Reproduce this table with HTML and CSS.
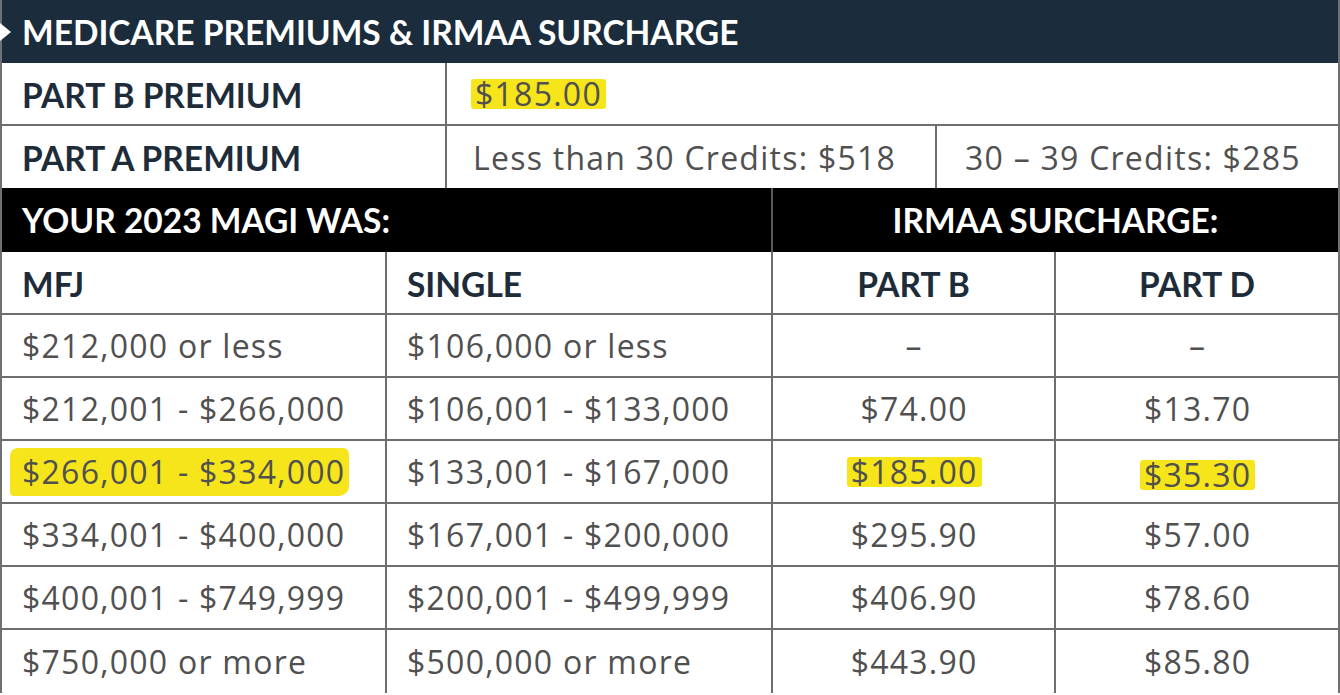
FILE: index.html
```html
<!DOCTYPE html>
<html lang="en">
<head>
<meta charset="utf-8">
<title>Medicare Premiums &amp; IRMAA Surcharge</title>
<link rel="stylesheet" href="styles.css">
</head>
<body>
<div class="sheet">
  <div class="title">
    <svg class="chev" width="12" height="20" viewBox="0 0 12 20"><path d="M0 1 L11 10 L0 19 Z" fill="#ffffff"/></svg>
    <span>MEDICARE PREMIUMS &amp; IRMAA SURCHARGE</span>
  </div>
  <div class="premiums">
    <div class="cell label">PART B PREMIUM</div>
    <div class="cell value span2 no-right"><span class="hl">$185.00</span></div>
    <div class="cell label last-row">PART A PREMIUM</div>
    <div class="cell value last-row">Less than 30 Credits: $518</div>
    <div class="cell value last-row no-right">30 – 39 Credits: $285</div>
  </div>
  <div class="dark">
    <div class="dark-cell">YOUR 2023 MAGI WAS:</div>
    <div class="dark-cell center">IRMAA SURCHARGE:</div>
  </div>
  <div class="bands">
    <div class="cell label">MFJ</div>
    <div class="cell label">SINGLE</div>
    <div class="cell label center">PART B</div>
    <div class="cell label center">PART D</div>

    <div class="cell value">$212,000 or less</div>
    <div class="cell value">$106,000 or less</div>
    <div class="cell value center">–</div>
    <div class="cell value center">–</div>

    <div class="cell value">$212,001 - $266,000</div>
    <div class="cell value">$106,001 - $133,000</div>
    <div class="cell value center">$74.00</div>
    <div class="cell value center">$13.70</div>

    <div class="cell value"><span class="hl hl-wide">$266,001 - $334,000</span></div>
    <div class="cell value">$133,001 - $167,000</div>
    <div class="cell value center"><span class="hl">$185.00</span></div>
    <div class="cell value center"><span class="hl hl-low">$35.30</span></div>

    <div class="cell value">$334,001 - $400,000</div>
    <div class="cell value">$167,001 - $200,000</div>
    <div class="cell value center">$295.90</div>
    <div class="cell value center">$57.00</div>

    <div class="cell value">$400,001 - $749,999</div>
    <div class="cell value">$200,001 - $499,999</div>
    <div class="cell value center">$406.90</div>
    <div class="cell value center">$78.60</div>

    <div class="cell value">$750,000 or more</div>
    <div class="cell value">$500,000 or more</div>
    <div class="cell value center">$443.90</div>
    <div class="cell value center">$85.80</div>
  </div>
</div>
</body>
</html>
```

FILE: styles.css
```css
* { box-sizing: border-box; }
html, body { margin: 0; padding: 0; background: #ffffff; }
body { width: 1340px; height: 695px; overflow: hidden; }

.sheet {
  width: 1340px;
  border-left: 2px solid #707070;
  border-right: 2px solid #707070;
}

.title {
  height: 63px;
  background: #1b2d3d;
  color: #ffffff;
  font-family: Lato, "Noto Sans", sans-serif;
  font-weight: 700;
  font-size: 33.5px;
  display: flex;
  align-items: center;
  padding-left: 20px;
  position: relative;
}
.title .chev {
  position: absolute;
  left: -2px;
  top: 22px;
}

.cell {
  display: flex;
  align-items: center;
  padding-left: 20px;
  border-bottom: 2px solid #6e6e6e;
  border-right: 2px solid #6e6e6e;
  height: 63px;
}
.no-right { border-right: none; }

.label {
  font-family: Lato, "Noto Sans", sans-serif;
  font-weight: 700;
  font-size: 33.5px;
  color: #1e2c3a;
  padding-top: 3px;
}
.value {
  font-family: "Open Sans", "Noto Sans", sans-serif;
  font-size: 32px;
  letter-spacing: 1.25px;
  color: #505050;
}
.center { justify-content: center; padding-left: 0; }
.value.center { padding-left: 1.25px; }

.premiums {
  display: grid;
  grid-template-columns: 445px 490px 1fr;
}
.premiums .span2 { grid-column: span 2; }
.premiums .last-row { height: 62px; border-bottom: none; }
.premiums .cell.value { padding-left: 26px; }
.premiums .cell.value.no-right { padding-left: 28px; }
.premiums .cell.label { padding-top: 2px; }

.dark {
  display: grid;
  grid-template-columns: 771px 1fr;
  height: 64px;
  background: #000000;
  color: #ffffff;
  font-family: Lato, "Noto Sans", sans-serif;
  font-weight: 700;
  font-size: 33.5px;
}
.dark-cell {
  display: flex;
  align-items: center;
  padding-left: 20px;
}
.dark-cell:first-child { border-right: 2px solid #5a5a5a; }
.dark-cell.center { justify-content: center; padding-left: 0; }

.bands {
  display: grid;
  grid-template-columns: 385px 386px 283px 1fr;
}
.bands .cell:nth-child(4n) { border-right: none; }
.bands .cell:nth-last-child(-n+4) { border-bottom: none; }

.hl {
  display: inline-block;
  background: #f6e51a;
  border-radius: 3px;
  line-height: 30px;
  padding: 0 4px;
  margin: 0 -4px;
}
.hl-wide {
  line-height: 36px;
  padding: 6px 4px 6px 12px;
  margin-left: -12px;
  border-radius: 8px 6px 10px 4px;
}
.hl-low { margin-top: 6px; }
```
